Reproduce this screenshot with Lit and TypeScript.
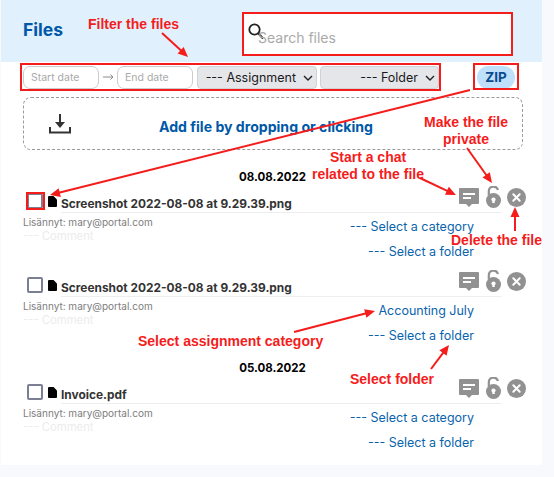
import { LitElement, html, css, svg } from "lit";
import { customElement } from "lit/decorators.js";

const chevron = html`<svg class="chev" width="10" height="6" viewBox="0 0 10 6"><path d="M1 1l4 4 4-4" fill="none" stroke="#222" stroke-width="1.4"/></svg>`;

const docIcon = html`<svg class="doc" width="9" height="11" viewBox="0 0 9 11"><path d="M1 0h4.500L9 3.500V10a1 1 0 0 1-1 1H1a1 1 0 0 1-1-1V1a1 1 0 0 1 1-1z" fill="#000"/></svg>`;

const chatIcon = html`<svg width="20" height="20" viewBox="0 0 20 20"><path d="M1 0h18a1 1 0 0 1 1 1v14a1 1 0 0 1-1 1h-6l-3 3-3-3H1a1 1 0 0 1-1-1V1a1 1 0 0 1 1-1z" fill="#919191"/><path d="M4 5h12v2H4zM4 9h8v2H4z" fill="#fff"/></svg>`;

const lockIcon = html`<svg width="15" height="22" viewBox="0 0 15 22"><path d="M2.800 9V5.200a4.700 4.700 0 0 1 9.200-1.200" fill="none" stroke="#919191" stroke-width="2.200"/><circle cx="7.500" cy="14.500" r="7.500" fill="#919191"/><circle cx="7.500" cy="13.500" r="2.100" fill="#fff"/><path d="M6.600 14h1.800l.4 3H6.200z" fill="#fff"/></svg>`;

const closeIcon = html`<svg class="close" width="19" height="19" viewBox="0 0 19 19"><circle cx="9.500" cy="9.500" r="9.500" fill="#919191"/><path d="M6.300 6.300l6.400 6.400M12.700 6.300l-6.400 6.400" stroke="#fff" stroke-width="2" stroke-linecap="round"/></svg>`;

const arrow = (x1: number, y1: number, x2: number, y2: number) => {
  const a = Math.atan2(y2 - y1, x2 - x1);
  const l = 11, w = 0.42;
  const p1 = [x2 - l * Math.cos(a - w), y2 - l * Math.sin(a - w)];
  const p2 = [x2 - l * Math.cos(a + w), y2 - l * Math.sin(a + w)];
  const mx = x2 - 8 * Math.cos(a), my = y2 - 8 * Math.sin(a);
  return svg`<line x1=${x1} y1=${y1} x2=${mx} y2=${my} stroke="#f51c1c" stroke-width="2"/><polygon points="${x2},${y2} ${p1[0]},${p1[1]} ${p2[0]},${p2[1]}" fill="#f51c1c"/>`;
};

interface Row { name: string; category: string; }

@customElement("app-root")
export class AppRoot extends LitElement {
  static styles = css`
    :host {
      display: block;
      position: relative;
      width: 554px;
      height: 477px;
      overflow: hidden;
      background: #f7f9fd;
      font-family: "Inter", "Open Sans", sans-serif;
    }
    .card { margin-left: 1px; width: 541px; height: 465px; background: #fff; }
    header {
      height: 62px;
      background: #e0f0fc;
      display: flex;
      padding: 12px 29px 0 22px;
      box-sizing: border-box;
      justify-content: space-between;
    }
    h1 { margin: 7px 0 0; font-size: 17.500px; line-height: 22px; font-weight: 700; color: #0058a8; }
    .search {
      width: 271px; height: 44px; box-sizing: border-box;
      background: #fff; border: 2px solid #f51c1c;
      display: flex; padding: 9px 0 0 4px;
    }
    .search span { margin: 6px 0 0 -6px; font-size: 14px; line-height: 18px; color: #a9a9a9; }
    .filters { display: flex; padding: 4px 0 0 22px; height: 23px; align-items: flex-start; }
    .date {
      width: 76px; height: 23px; box-sizing: border-box;
      border: 1px solid #cccccc; border-radius: 7px;
      font-size: 10.500px; line-height: 21px; color: #aaaaaa; padding-left: 7px;
    }
    .sep { width: 18px; display: flex; justify-content: center; padding-top: 7px; }
    .select {
      height: 23px; box-sizing: border-box; margin-left: 4px;
      background: #e4e6ea; border: 1px solid #d0d2d6; border-radius: 4px;
      display: flex; align-items: center; justify-content: flex-end;
      font-size: 12.500px; color: #1a1a1a; padding-right: 3px; white-space: nowrap;
    }
    .select.a { width: 120px; }
    .select.f { width: 119px; margin-left: 3px; }
    .chev { margin-left: 7px; }
    .zip {
      width: 38px; height: 23px; margin-left: 38px;
      background: #bee0fa; border-radius: 12px;
      font-size: 13.500px; line-height: 23px; font-weight: 700; color: #0b4a8e; text-align: center;
    }
    .drop {
      margin: 8px 0 0 22px; width: 500px; height: 53px; box-sizing: border-box;
      border: 1px dashed #9a9a9a; border-radius: 8px;
      display: flex; padding: 16px 0 0 25px;
    }
    .drop b { margin: 4px 0 0 88px; font-size: 14.100px; line-height: 18px; font-weight: 700; color: #0058a8; white-space: nowrap; }
    .dt { margin: 20px 0 2px; text-align: center; font-size: 11.500px; line-height: 14px; font-weight: 700; color: #000; width: 543px; }
    .dt.second { margin: 12px 0 2px; }
    .row { margin-bottom: 5px; }
    .top { display: flex; height: 27px; padding-left: 26px; align-items: flex-end; }
    .check {
      width: 16px; height: 16px; box-sizing: border-box; margin-bottom: 4px;
      border: 2px solid #7b7f93; border-radius: 2px; background: #fff;
    }
    .doc { margin: 0 4px 6px 5px; }
    .name {
      flex: 0 0 440px; height: 27px; box-sizing: border-box;
      border-bottom: 1px solid #eeeeee; display: flex; align-items: flex-end; justify-content: space-between;
    }
    .name b { font-size: 11.900px; line-height: 18px; font-weight: 700; color: #333; white-space: nowrap; position: relative; top: 1px; }
    .acts { display: flex; gap: 7px; align-items: flex-start; height: 26px; }
    .acts svg:first-child { margin-top: 2px; }
    .close { margin: 0 0 6px 6px; }
    .body { display: flex; justify-content: space-between; padding: 2px 68px 0 22px; height: 50px; }
    .meta { font-size: 10px; line-height: 14px; color: #7d7d7d; }
    .comment { font-size: 11.300px; line-height: 14px; color: #ececec; }
    .links { margin-top: -1px; text-align: right; font-size: 12.500px; line-height: 25px; color: #0a64ad; }
    .overlay { position: absolute; inset: 0; pointer-events: none; }
    .overlay svg { position: absolute; left: 0; top: 0; }
    .note {
      position: absolute; font-family: "Liberation Sans", Arial, sans-serif;
      font-weight: 700; font-size: 14px; line-height: 17px; color: #f51c1c; text-align: center; white-space: nowrap;
    }
    .box { position: absolute; box-sizing: border-box; border: 2px solid #f51c1c; }
  `;

  private renderRow(r: Row) {
    return html`<div class="row">
      <div class="top">
        <div class="check"></div>
        ${docIcon}
        <div class="name">
          <b>${r.name}</b>
          <div class="acts">${chatIcon}${lockIcon}</div>
        </div>
        ${closeIcon}
      </div>
      <div class="body">
        <div>
          <div class="meta">Lisännyt: mary@portal.com</div>
          <div class="comment">--- Comment</div>
        </div>
        <div class="links">
          <div>${r.category}</div>
          <div>--- Select a folder</div>
        </div>
      </div>
    </div>`;
  }

  render() {
    return html`
      <div class="card">
        <header>
          <h1>Files</h1>
          <div class="search">
            <svg width="16" height="17" viewBox="0 0 16 17"><circle cx="6.500" cy="6.500" r="5.200" fill="none" stroke="#222" stroke-width="1.800"/><path d="M10.500 10.500l4.500 5" stroke="#222" stroke-width="2"/></svg>
            <span>Search files</span>
          </div>
        </header>
        <div class="filters">
          <div class="date">Start date</div>
          <div class="sep"><svg width="11" height="8" viewBox="0 0 11 8"><path d="M0 4h10M7.500 1.500L10 4 7.500 6.500" fill="none" stroke="#8a8a8a" stroke-width="1"/></svg></div>
          <div class="date">End date</div>
          <div class="select a">--- Assignment ${chevron}</div>
          <div class="select f">--- Folder ${chevron}</div>
          <div class="zip">ZIP</div>
        </div>
        <div class="drop">
          <svg width="22" height="20" viewBox="0 0 22 20"><path d="M11 0v11" stroke="#333" stroke-width="2"/><path d="M6 8h10l-5 6z" fill="#333"/><path d="M1 13v5.500h20V13" fill="none" stroke="#333" stroke-width="2"/></svg>
          <b>Add file by dropping or clicking</b>
        </div>
        <div class="dt">08.08.2022</div>
        ${this.renderRow({ name: "Screenshot 2022-08-08 at 9.29.39.png", category: "--- Select a category" })}
        ${this.renderRow({ name: "Screenshot 2022-08-08 at 9.29.39.png", category: "Accounting July" })}
        <div class="dt second">05.08.2022</div>
        ${this.renderRow({ name: "Invoice.pdf", category: "--- Select a category" })}
      </div>
      <div class="overlay">
        <div class="box" style="left:20px;top:63px;width:421px;height:28px"></div>
        <div class="box" style="left:473px;top:63px;width:46px;height:27px"></div>
        <div class="box" style="left:26px;top:192px;width:19px;height:18px"></div>
        <svg width="554" height="477" viewBox="0 0 554 477">
          ${arrow(162, 33, 188, 57)}
          ${arrow(470, 90, 50, 195)}
          ${arrow(420, 178, 456, 195)}
          ${arrow(467, 148, 492, 183)}
          ${arrow(515, 231, 515, 207)}
          ${arrow(294, 332, 375, 311)}
          ${arrow(431, 369, 449, 345)}
        </svg>
        <div class="note" style="left:88px;top:16px">Filter the files</div>
        <div class="note" style="left:424px;top:114px">Make the file<br />private</div>
        <div class="note" style="left:312px;top:149px">Start a chat<br />related to the file</div>
        <div class="note" style="left:451px;top:232px">Delete the file</div>
        <div class="note" style="left:138px;top:333px">Select assignment category</div>
        <div class="note" style="left:350px;top:371px">Select folder</div>
      </div>
    `;
  }
}
